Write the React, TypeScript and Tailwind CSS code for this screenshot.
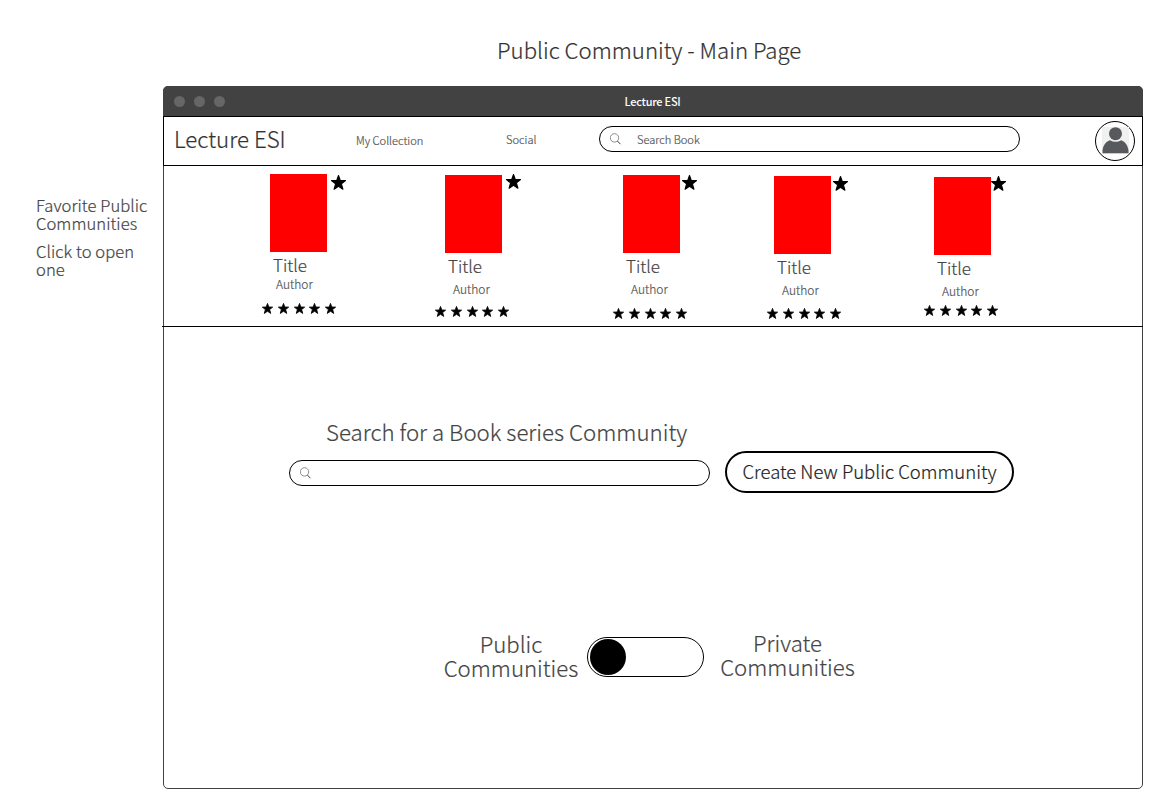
import React from "react";

type Book = {
  column: string;
  cover: string;
  favorite: string;
  title: string;
  author: string;
  rating: string;
};

const books: Book[] = [
  { column: "ml-[99px] pt-2", cover: "ml-2", favorite: "ml-1 mt-[1px]", title: "ml-[11px]", author: "ml-[14px] mt-0", rating: "mt-[11.3px]" },
  { column: "ml-[83px] pt-[9px]", cover: "ml-[10px]", favorite: "ml-1 -mt-[1px]", title: "ml-[13px]", author: "ml-[18px] mt-1", rating: "mt-[9.3px]" },
  { column: "ml-[88px] pt-[9px]", cover: "ml-[10px]", favorite: "ml-[2px] mt-0", title: "ml-[13px]", author: "ml-[18px] mt-1", rating: "mt-[11.3px]" },
  { column: "ml-[64px] pt-[10px]", cover: "ml-[7px]", favorite: "ml-[2px] mt-0", title: "ml-[10px]", author: "ml-[15px] mt-1", rating: "mt-[10.3px]" },
  { column: "ml-[67px] pt-[11px]", cover: "ml-[10px]", favorite: "ml-0 -mt-[1px]", title: "ml-[13px]", author: "ml-[18px] mt-1", rating: "mt-[6.3px]" },
];

function Star({ className }: { className: string }) {
  return (
    <svg viewBox="0 0 16 16" className={className} fill="#000" stroke="#000" strokeWidth="1.2" strokeLinejoin="round">
      <path d="M8 .6 9.9 5.8 15.5 6 11.1 9.5 12.7 15.2 8 12 3.3 15.2 4.9 9.5 .5 6 6.1 5.8Z" />
    </svg>
  );
}

function SearchIcon() {
  return (
    <svg viewBox="0 0 12 12" className="size-3 shrink-0" fill="none" stroke="#444">
      <circle cx="4.5" cy="4.9" r="4.2" strokeWidth="0.6" />
      <path d="M7.4 8 10.4 11.2" strokeWidth="1" />
    </svg>
  );
}

function Avatar() {
  return (
    <div className="mt-1 ml-[75px] flex size-[39.5px] items-center justify-center rounded-full border border-black">
      <svg viewBox="0 0 28 28" className="size-7">
        <rect x="1" width="27" height="27" fill="#f0f0f0" />
        <circle cx="14.5" cy="6.7" r="6.5" fill="#58595d" />
        <path d="M1.5 26.3V23.3C2.5 17.3 5.5 14.3 9 13.3 12.5 15.3 16.5 15.3 20 13.3 23.5 14.3 26.5 17.3 27.5 23.3V26.3Z" fill="#58595d" />
      </svg>
    </div>
  );
}

function BookCard({ book }: { book: Book }) {
  return (
    <article className={`w-[90px] shrink-0 ${book.column}`}>
      <div className="flex h-[78px]">
        <div className={`h-[78px] w-[57px] shrink-0 bg-[#ff0000] ${book.cover}`} />
        <Star className={`size-[15px] shrink-0 ${book.favorite}`} />
      </div>
      <h3 className={`h-[26px] text-[17px] leading-[26px] text-[#444] ${book.title}`}>Title</h3>
      <p className={`h-[14px] text-[12px] leading-[12px] text-[#555] ${book.author}`}>Author</p>
      <div className={`flex gap-[4.8px] ${book.rating}`}>
        {[0, 1, 2, 3, 4].map((i) => (
          <Star key={i} className="size-[11px] shrink-0" />
        ))}
      </div>
    </article>
  );
}

export default function App() {
  return (
    <div className="flex h-[806px] w-[1165px] flex-col overflow-hidden bg-white font-['Noto_Sans_CJK_SC',sans-serif] font-light whitespace-nowrap [-webkit-text-stroke:0.2px]">
      <h1 className="h-[86px] pt-[31px] pl-[497px] text-[22.2px] leading-[36px] text-[#333]">Public Community - Main Page</h1>
      <div className="flex">
        <aside className="w-[163px] shrink-0 pt-[110px] pl-9 text-[16.6px] leading-[18px] tracking-[0.05px] text-[#444]">
          <p>Favorite Public<br />Communities</p>
          <p className="mt-[10px]">Click to open<br />one</p>
        </aside>
        <main className="flex h-[703px] w-[980px] flex-col rounded-[5px] border border-[#424242]">
          <div className="-mx-px -mt-px flex h-[30px] shrink-0 items-center rounded-t-[5px] bg-[#424242] pl-[11px]">
            <div className="flex gap-[9px]">
              <span className="size-[11px] rounded-full bg-[#666]" />
              <span className="size-[11px] rounded-full bg-[#666]" />
              <span className="size-[11px] rounded-full bg-[#666]" />
            </div>
            <span className="ml-[399.5px] text-[11px] font-medium tracking-[-0.25px] text-white [-webkit-text-stroke:0px]">Lecture ESI</span>
          </div>
          <nav className="-mx-px flex h-[50px] shrink-0 border border-black">
            <span className="w-[182px] pl-[10px] text-[22.3px] leading-[42px] text-[#333]">Lecture ESI</span>
            <span className="w-[150px] pl-[10px] text-[11.1px] leading-[46px] text-[#555]">My Collection</span>
            <span className="w-[103px] pl-[10px] text-[11.1px] leading-[44px] text-[#555]">Social</span>
            <div className="mt-[9px] flex h-[26px] w-[421px] items-center rounded-full border border-black pl-[10px]">
              <SearchIcon />
              <span className="ml-[15px] text-[11.1px] text-[#555]">Search Book</span>
            </div>
            <Avatar />
          </nav>
          <section className="-mr-px -ml-[2px] flex h-[161px] shrink-0 border-b border-black pl-px">
            {books.map((book, i) => (
              <BookCard key={i} book={book} />
            ))}
          </section>
          <section className="flex h-[310px] shrink-0 pt-[90px] pl-[125px]">
            <div className="w-[421px]">
              <h2 className="h-[43px] pl-[37px] text-[22.25px] leading-[28px] text-[#444]">Search for a Book series Community</h2>
              <div className="flex h-[26px] items-center rounded-full border border-black pl-[10px]">
                <SearchIcon />
              </div>
            </div>
            <button className="mt-[34px] ml-[15px] h-[42px] w-[289px] rounded-[21px] border-2 border-black pb-[2px] text-[18.5px] leading-[36px] text-[#222]">Create New Public Community</button>
          </section>
          <section className="flex pl-[279.5px] text-center text-[22.2px] leading-[24px] text-[#444]">
            <p className="mt-[-6px] w-[135px]">Public<br />Communities</p>
            <div className="ml-[8.5px] flex h-[40px] w-[117px] items-center rounded-full border border-black pl-[2px]">
              <span className="size-9 rounded-full bg-black" />
            </div>
            <p className="mt-[-7px] ml-[16px] w-[135px]">Private<br />Communities</p>
          </section>
        </main>
      </div>
    </div>
  );
}
